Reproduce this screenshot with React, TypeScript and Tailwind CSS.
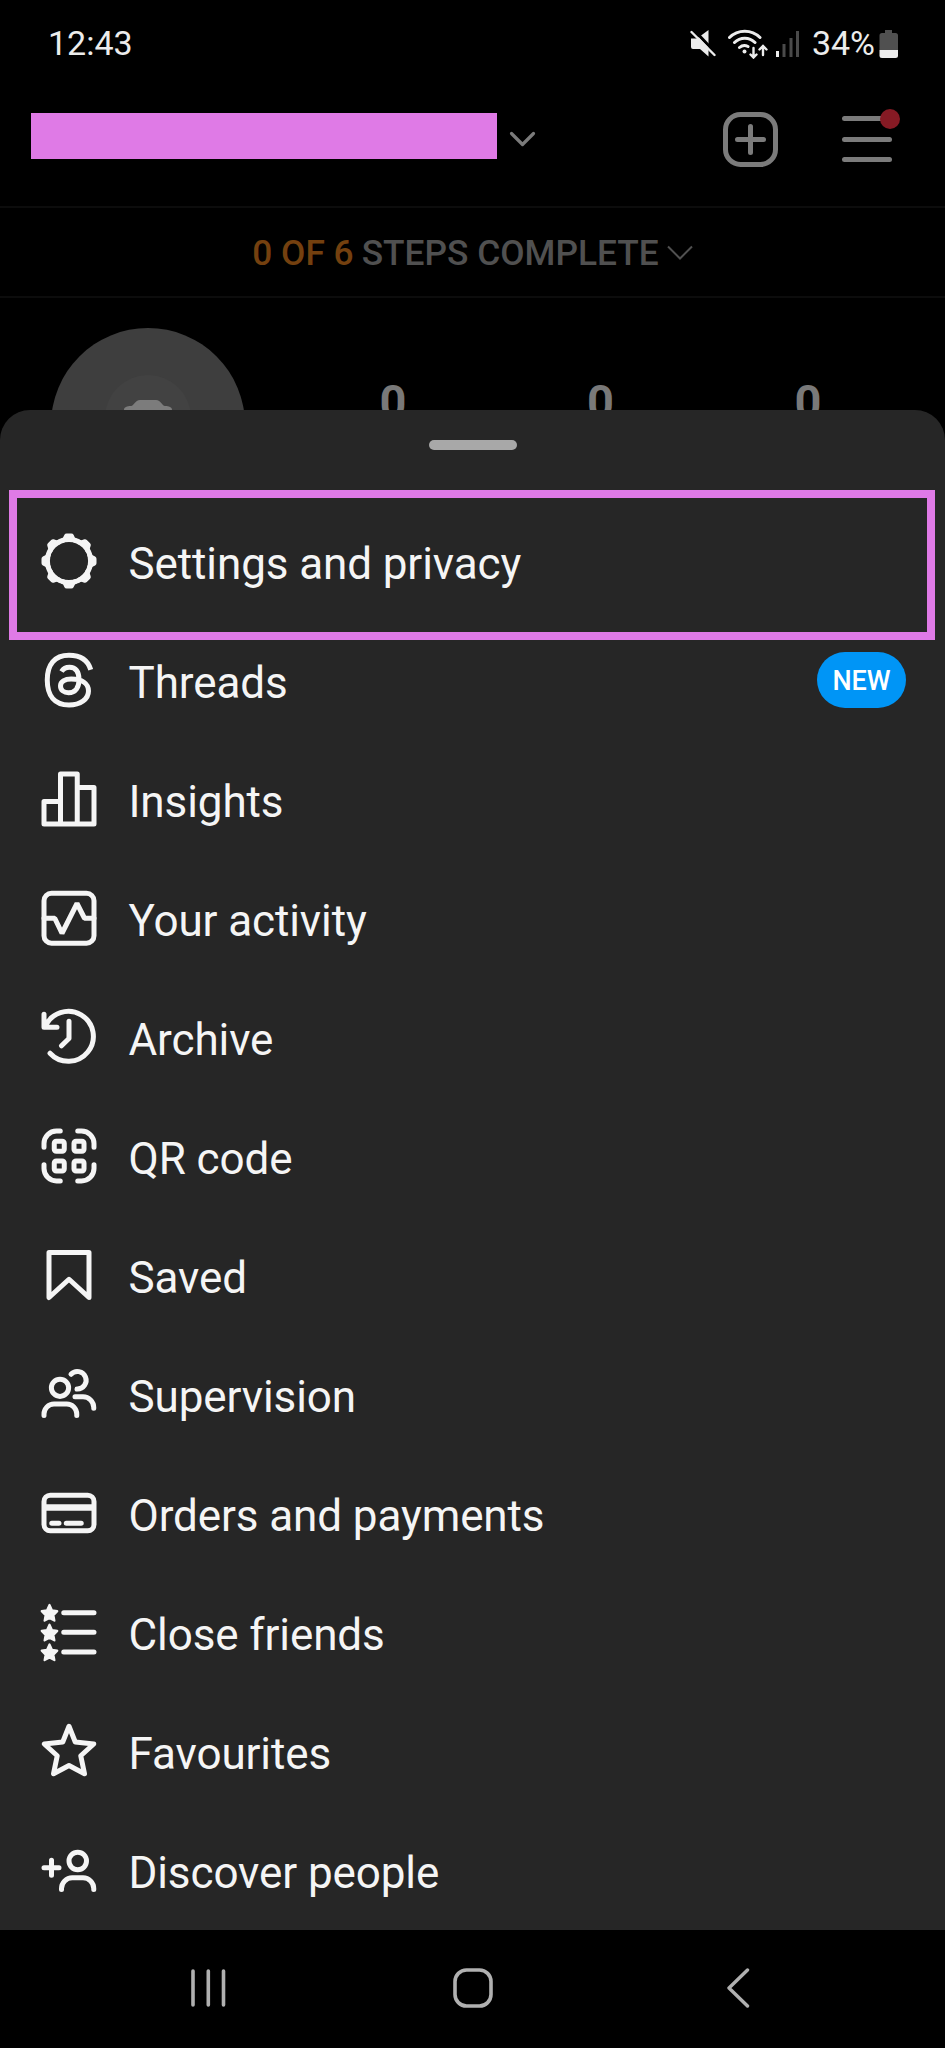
import React from "react";

interface MenuItem {
  label: string;
  icon: React.ReactNode;
  badge?: string;
}

const STAR = "M4.2 1.2l1 2.15 2.1.3-1.55 1.6.4 2.2-1.95-1.05-1.95 1.05.4-2.2L1.1 3.65l2.1-.3z";

const menuItems: MenuItem[] = [
  {
    label: "Settings and privacy",
    icon: (
      <>
        <circle cx="12" cy="12" r="8.635" />
        <path d="M14.232 3.656a1.269 1.269 0 0 1-.796-.66L12.93 2h-1.86l-.505.996a1.269 1.269 0 0 1-.796.66m-.001 16.688a1.269 1.269 0 0 1 .796.66l.505.996h1.862l.505-.996a1.269 1.269 0 0 1 .796-.66M3.656 9.768a1.269 1.269 0 0 1-.66.796L2 11.07v1.862l.996.505a1.269 1.269 0 0 1 .66.796m16.688-.001a1.269 1.269 0 0 1 .66-.796L22 12.93v-1.86l-.996-.505a1.269 1.269 0 0 1-.66-.796M7.678 4.522a1.269 1.269 0 0 1-1.03.096l-1.06-.348L4.27 5.587l.348 1.062a1.269 1.269 0 0 1-.096 1.03m11.8 11.799a1.269 1.269 0 0 1 1.03-.096l1.06.348 1.318-1.317-.348-1.062a1.269 1.269 0 0 1 .096-1.03m-14.956.001a1.269 1.269 0 0 1 .096 1.03l-.348 1.06 1.317 1.318 1.062-.348a1.269 1.269 0 0 1 1.03.096m11.799-11.8a1.269 1.269 0 0 1-.096-1.03l.348-1.06-1.317-1.318-1.062.348a1.269 1.269 0 0 1-1.03-.096" />
      </>
    ),
  },
  {
    label: "Threads",
    badge: "NEW",
    icon: (
      <path
        strokeLinecap="butt"
        d="M20.7 7.9C19.6 4.2 16.5 2.1 12 2.1 6.2 2.1 3.3 5.8 3.3 12S6.2 22 12 22c4.6 0 7.8-2.4 7.8-5.6 0-3-2.6-4.8-6.9-4.8-2.6 0-4.3 1.1-4.3 2.8 0 1.6 1.4 2.7 3.2 2.7 2.9 0 4.2-2.2 4.2-5.3 0-3.2-1.4-4.9-3.8-4.9-1.5 0-2.5.6-3.2 1.7"
      />
    ),
  },
  {
    label: "Insights",
    icon: <path d="M8.6 22V2h6.7v20M8.6 13H2v9h20V7.4h-6.7" />,
  },
  {
    label: "Your activity",
    icon: (
      <>
        <rect x="2" y="2.1" width="20" height="20" rx="3" />
        <path strokeLinejoin="miter" strokeMiterlimit="1" d="M2 12.1h4.3l2.9 6 6-11.9 3 5.9H22" />
      </>
    ),
  },
  {
    label: "Archive",
    icon: (
      <path d="M2 2.9v5.2h5.2M2.5 7.9A10 10 0 1 1 4.4 18.5M12 5.7v6.9l-3 2.9" />
    ),
  },
  {
    label: "QR code",
    icon: (
      <>
        <path d="M2 8.5V7a5 5 0 0 1 5-5h1.5M15.5 2H17a5 5 0 0 1 5 5v1.5M22 15.5V17a5 5 0 0 1-5 5h-1.5M8.5 22H7a5 5 0 0 1-5-5v-1.5" />
        <rect x="6.1" y="6.1" width="4" height="4" rx=".8" />
        <rect x="14" y="6.1" width="4" height="4" rx=".8" />
        <rect x="6.1" y="14" width="4" height="4" rx=".8" />
        <rect x="14" y="14" width="4" height="4" rx=".8" />
      </>
    ),
  },
  {
    label: "Saved",
    icon: <path d="M20 21l-8-7.3L4 21V3h16z" />,
  },
  {
    label: "Supervision",
    icon: (
      <>
        <circle cx="8.4" cy="9.5" r="3.45" />
        <path d="M2 20.6V20a4 4 0 0 1 4-4h5.1a4 4 0 0 1 4 4v.6" />
        <path d="M12.8 4.1A3.5 3.5 0 1 1 15.2 10M14.4 13.1h3.2a4.3 4.3 0 0 1 4.3 4.3v.3" />
      </>
    ),
  },
  {
    label: "Orders and payments",
    icon: (
      <>
        <rect x="2" y="4.9" width="20" height="14.2" rx="2.5" />
        <path strokeWidth="2.6" strokeLinecap="butt" d="M2 9.8h20" />
        <path d="M5.1 16.1H8M10.9 16.1h6" />
      </>
    ),
  },
  {
    label: "Close friends",
    icon: (
      <>
        <path d="M9.9 4.3H22M9.9 12.1H22M9.9 20H22" />
        <g fill="currentColor" strokeWidth=".9">
          <path d={STAR} />
          <path d={STAR} transform="translate(0 7.9)" />
          <path d={STAR} transform="translate(0 15.8)" />
        </g>
      </>
    ),
  },
  {
    label: "Favourites",
    icon: (
      <path
        strokeWidth="2"
        d="M12 2.1l2.5 6.3 7.4.8-5.2 4.7 1.5 7.2-6.2-3.3-6.2 3.3 1.5-7.2-5.2-4.7 7.4-.8z"
      />
    ),
  },
  {
    label: "Discover people",
    icon: (
      <>
        <path d="M2 11.1h6M5 8.1v6" />
        <circle cx="15.5" cy="8.4" r="3.5" />
        <path d="M9 19.8v-.4a4.3 4.3 0 0 1 4.3-4.3h4.3a4.3 4.3 0 0 1 4.3 4.3v.4" />
      </>
    ),
  },
];

const StatusBar = () => (
  <div className="flex h-[87px] items-center pl-[48px] pr-[46px] text-[34px] text-[#ececec]">
    <span className="mt-[-1px]">12:43</span>
    <div className="ml-auto flex items-center">
      {/* muted speaker */}
      <svg width="26" height="27" viewBox="0 0 26 27" className="mr-3">
        <path d="M1 8.5h6L18.5 0v26.5L10 19H3a2 2 0 0 1-2-2z" fill="#ececec" />
        <path d="M3.5-.5l24 25.5" stroke="#000" strokeWidth="3" />
        <path d="M1.5 2l23 23" stroke="#ececec" strokeWidth="2.4" strokeLinecap="round" />
      </svg>
      {/* wifi with traffic arrows */}
      <svg width="40" height="30" viewBox="0 0 40 30" className="mr-[7px]" fill="none" stroke="#ececec" strokeWidth="3" strokeLinecap="round">
        <path d="M1.5 8.5a21.5 21.5 0 0 1 30.5 0M6.5 13.5a14.5 14.5 0 0 1 20.5 0M11.5 18.5a7.5 7.5 0 0 1 8.5-1" />
        <circle cx="16.5" cy="22.5" r="2" fill="#ececec" stroke="none" />
        <path strokeWidth="2.4" d="M25.5 19v9M22.5 25.500l3 3 3-3M35 26v-9M31.500 20.500l3.500-3.500 3.500 3.500" />
      </svg>
      <svg width="25" height="26" viewBox="0 0 25 26" strokeWidth="3" className="mr-[12px]">
        <path d="M2.5 20v6" stroke="#ececec" />
        <path d="M9 13v13M16 7v19M22.5 0v26" stroke="#4a4a4a" />
      </svg>
      <span className="mt-[-1px]">34%</span>
      <svg width="20" height="28" viewBox="0 0 20 28" className="ml-[4px]">
        <path d="M6 0h7v3h3.5a2.5 2.5 0 0 1 2.5 2.5V20H.5V5.5A2.5 2.5 0 0 1 3 3h3z" fill="#505050" />
        <path d="M.5 20H19v5.5a2.5 2.5 0 0 1-2.5 2.5H3A2.5 2.5 0 0 1 .5 25.5z" fill="#ececec" />
      </svg>
    </div>
  </div>
);

const ProfileHeader = () => (
  <div className="flex h-[121px] border-b-2 border-[#0c0c0c] pl-[31px] pr-[53px] pt-[26px]">
    <div className="h-[46px] w-[466px] bg-[#df7ae6]"></div>
    <svg className="ml-3 mt-[18px]" width="28" height="17" viewBox="0 0 28 17" fill="none" stroke="#7b7b7b" strokeWidth="3.2" strokeLinecap="round" strokeLinejoin="round">
      <path d="M2.5 2.5l11 11L24.5 2.5" />
    </svg>
    <svg className="ml-auto mt-[-1px]" width="55" height="55" viewBox="0 0 55 55" fill="none" stroke="#7b7b7b" strokeWidth="5" strokeLinecap="round">
      <rect x="2.5" y="2.5" width="50" height="50" rx="15" />
      <path d="M27.5 14.5v26M14.5 27.5h26" />
    </svg>
    <div className="relative ml-16 mt-[3px] flex h-[46px] w-[50px] flex-col justify-between">
      <div className="h-[5px] rounded-full bg-[#7b7b7b]"></div>
      <div className="h-[5px] rounded-full bg-[#7b7b7b]"></div>
      <div className="h-[5px] rounded-full bg-[#7b7b7b]"></div>
      <span className="absolute -right-2 -top-[7px] size-5 rounded-full bg-[#861a24]"></span>
    </div>
  </div>
);

const ProfileStats = () => (
  <div className="flex h-[113px] items-start overflow-hidden pl-[51px] pt-[30px]">
    <svg width="194" height="194" viewBox="0 0 194 194" className="shrink-0">
      <circle cx="97" cy="97" r="97" fill="#3e3e3e" />
      <circle cx="97" cy="90" r="43" fill="#424242" />
      <path d="M73 82c0-3 3-4 7-4 3 0 4-6 9-6h16c5 0 6 6 9 6 4 0 7 1 7 4v30H73z" fill="#7c7c7c" />
    </svg>
    <div className="ml-[44px] mt-[50px] flex text-center text-[47px] leading-none font-bold text-[#797979]">
      <span className="w-[208px]">0</span>
      <span className="w-[207px]">0</span>
      <span className="w-[208px]">0</span>
    </div>
  </div>
);

const App = () => {
  return (
    <div className="flex h-[2048px] w-[945px] flex-col overflow-hidden bg-black font-[Roboto,sans-serif]">
      <StatusBar />
      <ProfileHeader />
      <div className="flex h-[90px] items-center justify-center border-b-2 border-[#0c0c0c] pt-[3px] text-[35.3px] font-medium text-[#505050]">
        <span className="mr-2 text-[#74400f]">0 OF 6</span>
        <span>STEPS COMPLETE</span>
        <svg className="mb-[2px] ml-[8px]" width="26" height="16" viewBox="0 0 26 16" fill="none" stroke="#505050" strokeWidth="2">
          <path d="M1 1.5l12 12 12-12" />
        </svg>
      </div>
      <ProfileStats />

      {/* bottom sheet */}
      <div className="relative z-10 -mt-px h-[1520px] rounded-t-[30px] bg-[#262626] pt-[30px]">
        <div className="mx-auto h-[10px] w-[88px] rounded-full bg-[#a8a8a8]"></div>
        <ul className="mt-[51px] text-[#f5f5f5]">
          {menuItems.map((item) => (
            <li key={item.label} className="flex h-[119px] items-center pl-[39px] pr-[39px]">
              <svg
                className="size-[60px]"
                viewBox="0 0 24 24"
                fill="none"
                stroke="currentColor"
                strokeWidth="2"
                strokeLinecap="round"
                strokeLinejoin="round"
              >
                {item.icon}
              </svg>
              <span className="ml-[29.5px] pt-[6px] text-[44px] tracking-[-0.1px]">{item.label}</span>
              {item.badge && (
                <span className="ml-auto flex h-[56px] w-[89px] items-center justify-center rounded-full bg-[#0095f6] pt-[3px] text-[27px] font-medium text-white">
                  {item.badge}
                </span>
              )}
            </li>
          ))}
        </ul>
        {/* highlight around the first entry */}
        <div className="absolute left-[9px] top-[80px] h-[150px] w-[926px] border-8 border-[#df7ae6]"></div>
      </div>

      <div className="flex flex-1 items-center pb-[3px] pl-[190px]">
        <svg width="36" height="40" viewBox="0 0 36 40" stroke="#b0b0b0" strokeWidth="3.6" strokeLinecap="round">
          <path d="M3 3v34M18.3 3v34M33.5 3v34" />
        </svg>
        <svg className="ml-[227px]" width="40" height="40" viewBox="0 0 40 40" fill="none" stroke="#b0b0b0" strokeWidth="3.6">
          <rect x="2" y="2" width="36" height="36" rx="11.5" />
        </svg>
        <svg className="ml-[233px]" width="24" height="40" viewBox="0 0 24 40" fill="none" stroke="#b0b0b0" strokeWidth="3.4" strokeLinecap="round" strokeLinejoin="round">
          <path d="M21.5 2L3 20l18.5 18" />
        </svg>
      </div>
    </div>
  );
};

export default App;
